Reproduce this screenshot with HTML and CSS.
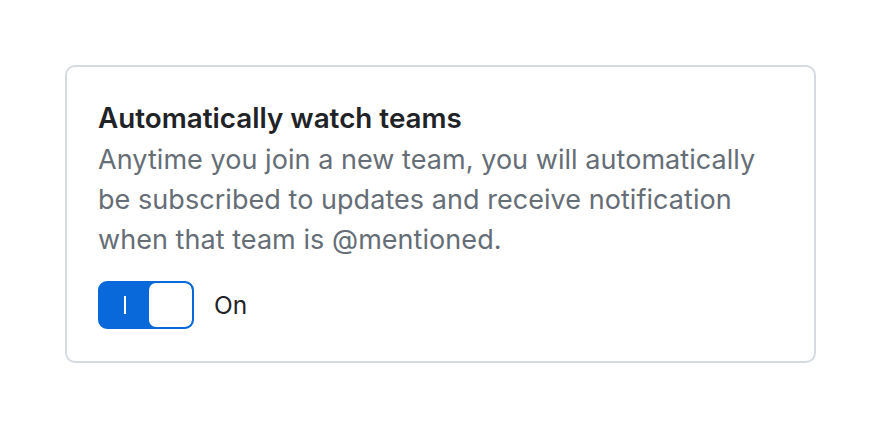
FILE: index.html
```html
<!DOCTYPE html>
<html>
<head>
<meta charset="utf-8">
<link rel="stylesheet" href="styles.css">
</head>
<body>
<div class="card">
  <h2 class="title">Automatically watch teams</h2>
  <p class="desc">Anytime you join a new team, you will automatically be subscribed to updates and receive notification when that team is @mentioned.</p>
  <div class="toggle-row">
    <button class="toggle" aria-pressed="true">
      <span class="track-on"><span class="bar"></span></span>
      <span class="knob"></span>
    </button>
    <span class="state">On</span>
  </div>
</div>
</body>
</html>
```
FILE: styles.css
```css
html, body { margin: 0; padding: 0; background: #ffffff; }
body {
  font-family: Inter, "Liberation Sans", sans-serif;
  padding: 65px 64px 0 65px;
}
.card {
  box-sizing: border-box;
  width: 751px;
  height: 298px;
  border: 2px solid #d4dbe2;
  border-radius: 10px;
  padding: 33px 31px 0 31px;
}
.title {
  margin: 0;
  font-size: 27.8px;
  font-weight: 600;
  color: #1f2328;
  line-height: 36px;
}
.desc {
  margin: 4px 0 0 0;
  font-size: 27px;
  line-height: 40px;
  color: #656d76;
  width: 684px;
  letter-spacing: 0.05px;
}
.toggle-row {
  display: flex;
  align-items: center;
  gap: 20px;
  margin-top: 21px;
}
.toggle {
  box-sizing: border-box;
  width: 96px;
  height: 48px;
  padding: 0;
  border: 2.5px solid #0969da;
  border-radius: 9px;
  background: #0969da;
  display: flex;
  align-items: stretch;
  overflow: hidden;
}
.track-on {
  flex: 1;
  display: flex;
  align-items: center;
  justify-content: center;
}
.bar {
  width: 2px;
  height: 18px;
  background: #ffffff;
}
.knob {
  width: 43px;
  background: #ffffff;
  border-radius: 7px;
}
.state {
  font-size: 24.5px;
  color: #1f2328;
}
```
